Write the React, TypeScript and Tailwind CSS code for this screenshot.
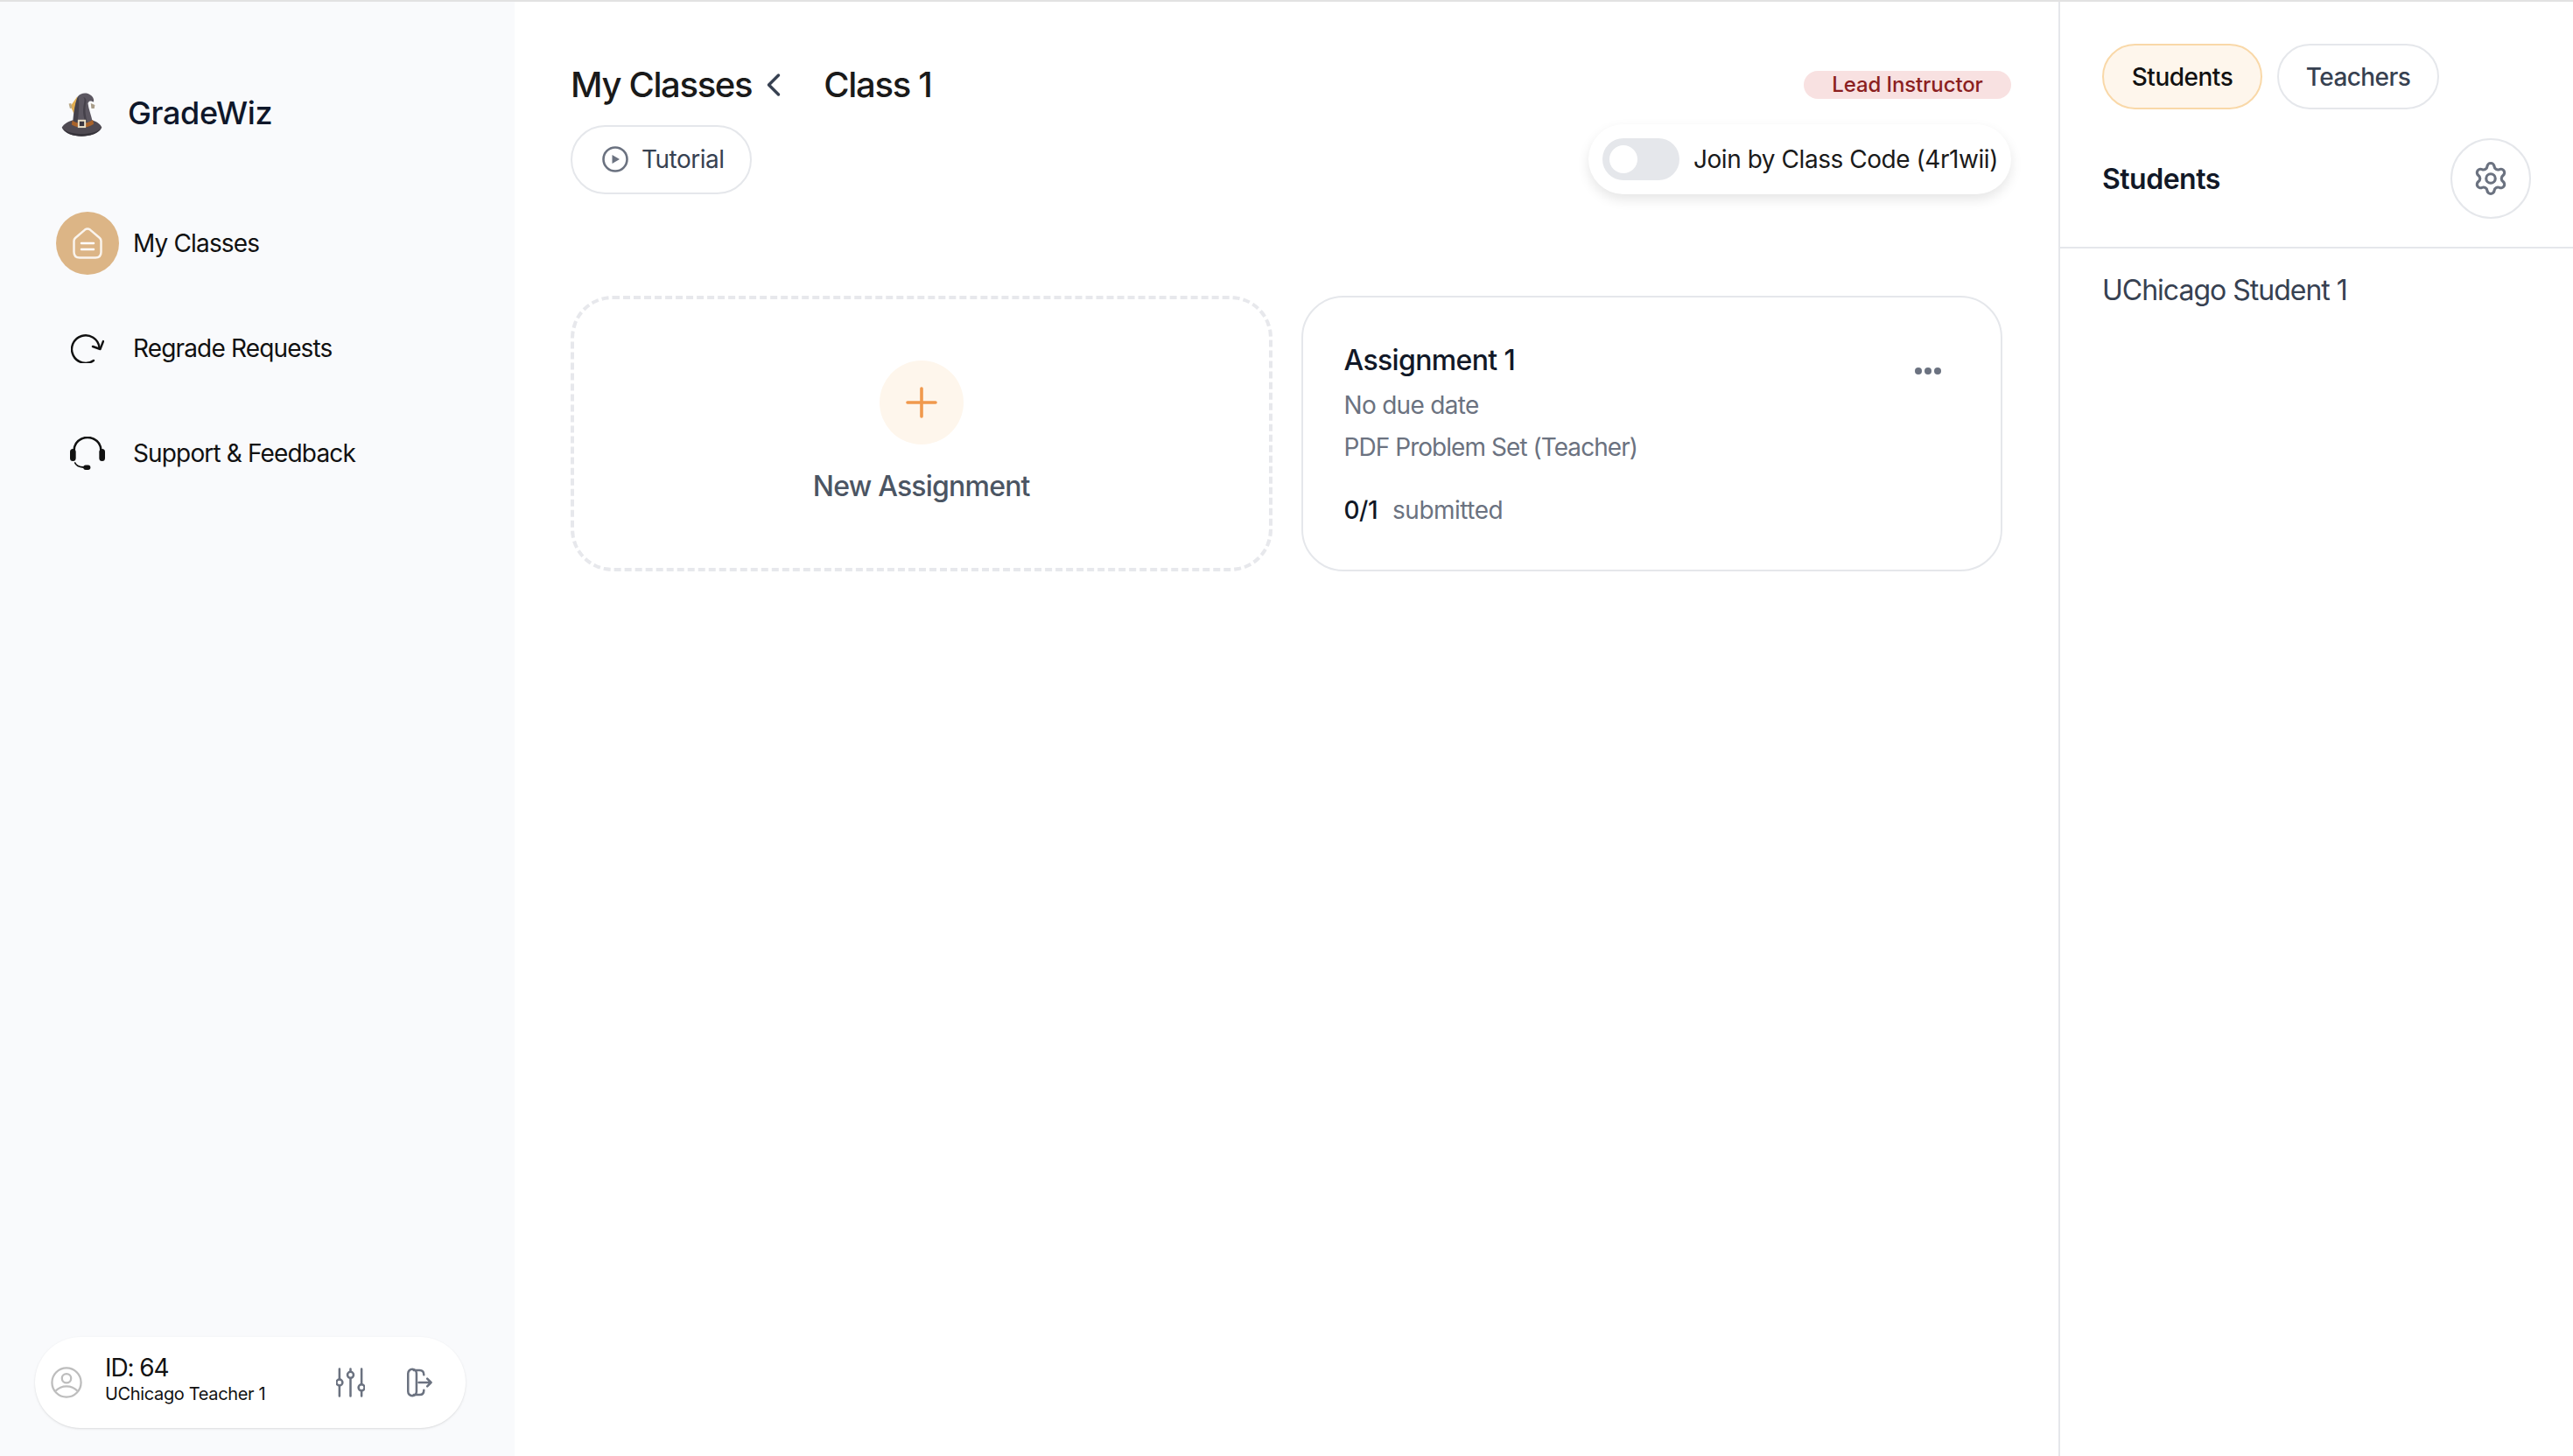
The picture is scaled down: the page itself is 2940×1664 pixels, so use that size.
import { ChevronLeft, Settings } from "lucide-react";

const Hat = () => (
  <svg viewBox="28 25 142 158" className="w-[47px] h-[53px] shrink-0 translate-y-[1px]">
    <path d="M84 42 L60 76 L74 108 Z" fill="#e2ae50" />
    <path d="M54 68 L62 66 L66 82 L58 84 Z" fill="#b9a888" />
    <path d="M130 66 L144 72 L142 84 L132 84 Z" fill="#a89c88" />
    <path d="M30 150 C38 136 56 128 72 124 L130 124 C146 128 162 136 168 150 C160 170 128 180 98 180 C68 180 38 170 30 150 Z" fill="#4f4a52" />
    <path d="M34 154 C50 168 76 172 98 172 C122 172 148 168 164 154 C154 172 126 180 98 180 C70 180 44 172 34 154 Z" fill="#37343b" />
    <path d="M68 130 C70 100 76 62 86 42 C94 32 112 28 126 36 C136 42 142 50 140 62 C134 60 126 54 120 66 C122 86 132 108 136 130 C112 146 88 146 68 130 Z" fill="#5c5761" />
    <path d="M86 42 C92 60 88 100 84 136 L70 130 C72 100 76 62 86 42 Z" fill="#45414a" />
    <path d="M104 46 C112 52 106 64 104 84 C102 104 108 120 112 136 L118 132 C112 110 108 90 114 62 C116 52 110 46 104 46 Z" fill="#45414a" />
    <path d="M66 126 C88 140 114 140 137 124 L140 138 C116 154 88 154 64 140 Z" fill="#a9632a" />
    <rect x="85" y="123" width="28" height="28" fill="#eadfc6" />
    <rect x="91" y="129" width="16" height="16" fill="#3a3640" />
  </svg>
);

const HomeIcon = () => (
  <svg viewBox="0 0 34 36" className="w-[34px] h-[36px]" fill="none" stroke="#ffffff" strokeWidth="2.5" strokeLinejoin="round" strokeLinecap="round">
    <path d="M14 2.6 L3 12 Q1.5 13.4 1.5 15.5 V28 Q1.5 34.5 8 34.5 H26 Q32.5 34.5 32.5 28 V15.5 Q32.5 13.4 31 12 L20 2.6 Q17 0.4 14 2.6 Z" strokeOpacity="0.85" />
    <path d="M10 18 H24 M10 25 H24" />
  </svg>
);

const RegradeIcon = () => (
  <svg viewBox="0 0 38 34" className="w-[38px] h-[34px]" fill="none" stroke="#111111" strokeWidth="2.4" strokeLinecap="round" strokeLinejoin="round">
    <path d="M26 31 A15.8 15.8 0 1 1 32.5 16" />
    <path d="M25 15 L33.5 18 L37 9" />
  </svg>
);

const HeadsetIcon = () => (
  <svg viewBox="0 0 42 38" className="w-[40px] h-[38px]" fill="none" preserveAspectRatio="none">
    <path d="M5 17 V15 A16 14 0 0 1 37 15 V17" stroke="#111111" strokeWidth="2.6" />
    <rect x="0" y="14" width="7" height="14" rx="3.5" fill="#111111" />
    <rect x="35" y="14" width="7" height="14" rx="3.5" fill="#111111" />
    <path d="M6 30 Q8 34.5 16 35" stroke="#111111" strokeWidth="1.8" strokeLinecap="round" />
    <rect x="16" y="32.5" width="8.5" height="5.5" rx="2.75" fill="#111111" />
  </svg>
);

const UserIcon = () => (
  <svg viewBox="0 0 38 38" className="w-[36px] h-[36px] shrink-0" fill="none" stroke="#bdbdbd" strokeWidth="2.4">
    <circle cx="19" cy="19" r="17.5" />
    <circle cx="19" cy="14" r="5.5" />
    <path d="M6 29 Q11 23.5 19 23.5 Q27 23.5 32 29" />
  </svg>
);

const SlidersIcon = () => (
  <svg viewBox="0 0 34 34" className="w-[33px] h-[34px]" fill="none" stroke="#6b7280" strokeWidth="2.6" strokeLinecap="round">
    <path d="M4 1 V13 M4 21 V33 M17 1 V4 M17 12 V33 M30 1 V19 M30 27 V33" />
    <circle cx="4" cy="17" r="3.6" />
    <circle cx="17" cy="8" r="3.6" />
    <circle cx="30" cy="23" r="3.6" />
  </svg>
);

const ExitIcon = () => (
  <svg viewBox="0 0 30 34" className="w-[29px] h-[34px]" fill="none" stroke="#6b7280" strokeWidth="2.6" strokeLinecap="round" strokeLinejoin="round">
    <rect x="1.3" y="1.3" width="10" height="31.4" rx="5" />
    <path d="M8 2.5 H15 Q20 2.5 20 8 M8 31.5 H15 Q20 31.5 20 26 M14 17 H28.5 M24 12.5 L28.5 17 L24 21.5" />
  </svg>
);

const PlayIcon = () => (
  <svg viewBox="0 0 30 30" className="w-[30px] h-[30px] shrink-0" fill="none">
    <circle cx="15" cy="15" r="13.5" stroke="#6b7280" strokeWidth="2.6" />
    <path d="M11.5 10 L20 15 L11.5 20 Z" fill="#6b7280" />
  </svg>
);

const PlusIcon = () => (
  <svg viewBox="0 0 36 36" className="w-[36px] h-[36px]" fill="none" stroke="#f0994d" strokeWidth="3.6" strokeLinecap="round">
    <path d="M18 2 V34 M2 18 H34" />
  </svg>
);

const navClass = "flex items-center h-[72px] pl-[64px] gap-[16px]";
const navText = "text-[28px] leading-[36px] text-[#111111] tracking-[-0.85px]";

export default function App() {
  return (
    <div className="flex w-[2940px] h-[1664px] bg-white border-t-2 border-[#e2e2e2] overflow-hidden font-['Inter','Liberation_Sans',sans-serif]">
      <aside className="w-[588px] shrink-0 h-full bg-[#f9fafc] flex flex-col justify-between">
        <div>
          <div className="flex items-center h-[55px] ml-[70px] mt-[100px] gap-[29px]">
            <Hat />
            <span className="text-[36px] leading-[44px] font-medium text-[#0f172a] tracking-[-0.35px] -translate-y-[1px]">GradeWiz</span>
          </div>
          <nav className="mt-[85px] flex flex-col gap-[48px]">
            <div className={navClass}>
              <span className="w-[72px] h-[72px] rounded-full bg-[#dcb586] flex items-center justify-center">
                <HomeIcon />
              </span>
              <span className={navText}>My Classes</span>
            </div>
            <div className={navClass}>
              <span className="w-[72px] h-[72px] flex items-center justify-center">
                <RegradeIcon />
              </span>
              <span className={navText}>Regrade Requests</span>
            </div>
            <div className={navClass}>
              <span className="w-[72px] h-[72px] flex items-center justify-center">
                <HeadsetIcon />
              </span>
              <span className={navText}>Support &amp; Feedback</span>
            </div>
          </nav>
        </div>
        <div className="ml-[40px] mb-[32px] w-[492px] h-[104px] rounded-full bg-white shadow-sm flex items-center pl-[18px] pr-[38px]">
          <UserIcon />
          <div className="ml-[26px] flex flex-col pb-[4px]">
            <span className="text-[28px] leading-[30px] text-[#111111] tracking-[-1.1px]">ID: 64</span>
            <span className="text-[20px] leading-[30px] text-[#111111] tracking-[-0.35px]">UChicago Teacher 1</span>
          </div>
          <div className="ml-auto flex items-center gap-[48px]">
            <SlidersIcon />
            <ExitIcon />
          </div>
        </div>
      </aside>

      <main className="flex-1 min-w-0 pl-[64px] pr-[54px] pt-[63px]">
        <div className="flex items-center justify-between h-[64px]">
          <div className="flex items-center">
            <span className="text-[40px] leading-[48px] font-medium text-[#1a1a1a] tracking-[-1.35px]">My Classes</span>
            <ChevronLeft className="w-[44px] h-[44px] ml-[3px] text-[#374151]" strokeWidth={1.9} />
            <span className="ml-[35px] text-[40px] leading-[48px] font-medium text-[#1a1a1a] tracking-[-1.3px]">Class 1</span>
          </div>
          <span className="w-[237px] h-[32px] rounded-full bg-[#f8e1e1] flex items-center justify-center text-[24px] leading-[30px] font-medium text-[#8b1f1f] tracking-[-0.1px]">Lead Instructor</span>
        </div>
        <div className="mt-[13px] flex items-center justify-between">
          <button className="w-[207px] h-[79px] rounded-full border-2 border-[#e5e7eb] flex items-center pl-[34px] gap-[15px] text-[28px] leading-[36px] text-[#374151] tracking-[-0.5px]">
            <PlayIcon />
            Tutorial
          </button>
          <div className="w-[483px] h-[80px] rounded-full bg-white shadow-[0_6px_14px_rgba(0,0,0,0.10)] flex items-center pl-[16px] gap-[16px]">
            <span className="w-[88px] h-[48px] shrink-0 rounded-full bg-[#e5e7eb] flex items-center pl-[8px]">
              <span className="w-[32px] h-[32px] rounded-full bg-white" />
            </span>
            <span className="text-[28px] leading-[34px] text-[#1a1a1a] tracking-[-0.45px] whitespace-nowrap">Join by Class Code (4r1wii)</span>
          </div>
        </div>
        <div className="mt-[116px] w-[1636px] grid grid-cols-2 gap-[33px]">
          <div className="h-[315px] rounded-[48px] border-[4px] border-dashed border-[#e7e8ec] flex flex-col items-center pt-[70px]">
            <span className="w-[96px] h-[96px] rounded-full bg-[#fef6ec] flex items-center justify-center">
              <PlusIcon />
            </span>
            <span className="mt-[28px] text-[32px] leading-[40px] font-medium text-[#4b5563] tracking-[-0.8px]">New Assignment</span>
          </div>
          <div className="h-[315px] rounded-[48px] border-2 border-[#e5e7eb] pl-[47px] pr-[68px] pt-[52px] flex justify-between items-start">
            <div className="flex flex-col">
              <span className="text-[32px] leading-[40px] font-medium text-[#111827] tracking-[-0.65px]">Assignment 1</span>
              <span className="mt-[13px] text-[28px] leading-[36px] text-[#6b7280] tracking-[-0.7px]">No due date</span>
              <span className="mt-[12px] text-[28px] leading-[36px] text-[#6b7280] tracking-[-0.95px]">PDF Problem Set (Teacher)</span>
              <div className="mt-[36px] flex items-center gap-[17px] text-[28px] leading-[36px] tracking-[-0.5px]">
                <span className="font-medium text-[#111827]">0/1</span>
                <span className="text-[#6b7280]">submitted</span>
              </div>
            </div>
            <div className="mt-[28px] flex gap-[3px]">
              <span className="w-[8px] h-[8px] rounded-full bg-[#6b7280]" />
              <span className="w-[8px] h-[8px] rounded-full bg-[#6b7280]" />
              <span className="w-[8px] h-[8px] rounded-full bg-[#6b7280]" />
            </div>
          </div>
        </div>
      </main>

      <aside className="w-[588px] shrink-0 h-full border-l-2 border-[#e5e7eb] flex flex-col">
        <div className="pl-[48px] pr-[48px] pt-[48px] border-b-2 border-[#e5e7eb] h-[282px]">
          <div className="flex gap-[17px]">
            <span className="w-[183px] h-[75px] rounded-full bg-[#fef6ec] border-2 border-[#f9d8a8] flex items-center justify-center text-[28px] leading-[36px] font-medium text-[#111111] tracking-[-0.5px]">Students</span>
            <span className="w-[185px] h-[75px] rounded-full border-2 border-[#e5e7eb] flex items-center justify-center text-[28px] leading-[36px] font-medium text-[#374151] tracking-[-0.6px]">Teachers</span>
          </div>
          <div className="mt-[33px] flex items-center justify-between">
            <span className="text-[32px] leading-[40px] font-semibold text-[#111827] tracking-[-0.5px] translate-y-[1px]">Students</span>
            <span className="w-[92px] h-[92px] rounded-full border-2 border-[#e5e7eb] flex items-center justify-center">
              <Settings className="w-[42px] h-[42px] text-[#6b7280]" strokeWidth={1.8} />
            </span>
          </div>
        </div>
        <div className="pl-[48px] pt-[28px] text-[32px] leading-[40px] text-[#374151] tracking-[-1px]">UChicago Student 1</div>
      </aside>
    </div>
  );
}
